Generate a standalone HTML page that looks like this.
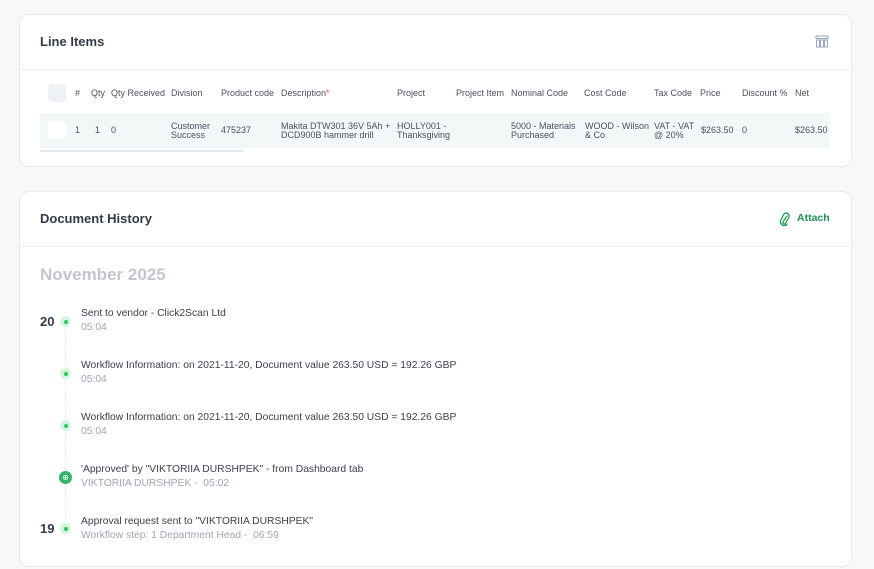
<!DOCTYPE html>
<html><head><meta charset="utf-8"><style>
*{margin:0;padding:0;box-sizing:border-box}
body{width:874px;height:569px;background:#f7f8f9;font-family:"Liberation Sans",sans-serif;color:#3a3f4d;position:relative;overflow:hidden}
.card{position:absolute;left:19px;width:833px;background:#fff;border:1px solid #e8eaed;border-radius:10px}
.a{position:absolute;white-space:nowrap}
.h{font-size:9px;color:#4a5060;top:88px}
.c{font-size:9px;color:#4a5060;line-height:9px}
.dot{position:absolute;left:60px;width:11px;height:11px;border-radius:50%;background:#d3f5dc}
.dot:after{content:"";position:absolute;left:3.5px;top:3.5px;width:4px;height:4px;border-radius:50%;background:#2fc36a}
.t1{font-size:10.3px;color:#3a3f4d}
.t2{font-size:10.3px;color:#a0a5b5}
</style></head><body>
<div class="card" style="top:14px;height:153px">
 <div style="position:absolute;left:0;right:0;top:54px;border-top:1px solid #eceef1"></div>
</div>
<div class="a" style="left:40px;top:34px;font-size:13px;font-weight:bold;color:#353a48">Line Items</div>
<svg class="a" style="left:815px;top:35px" width="14" height="13" viewBox="0 0 14 13" fill="none" stroke="#9aa6bd" stroke-width="1"><rect x="1" y="1" width="12" height="2.5"/><rect x="1.5" y="5" width="3" height="7"/><rect x="5.5" y="5" width="3" height="7"/><rect x="9.5" y="5" width="3" height="7"/></svg>
<div class="a" style="left:48px;top:84px;width:18px;height:18px;border-radius:4px;background:#eef1f6"></div>
<div class="a h" style="left:75px">#</div>
<div class="a h" style="left:91px">Qty</div>
<div class="a h" style="left:111px">Qty Received</div>
<div class="a h" style="left:171px">Division</div>
<div class="a h" style="left:221px">Product code</div>
<div class="a h" style="left:281px">Description<span style="color:#e5485d">*</span></div>
<div class="a h" style="left:397px">Project</div>
<div class="a h" style="left:456px">Project Item</div>
<div class="a h" style="left:511px">Nominal Code</div>
<div class="a h" style="left:584px">Cost Code</div>
<div class="a h" style="left:654px">Tax Code</div>
<div class="a h" style="left:700px">Price</div>
<div class="a h" style="left:742px">Discount %</div>
<div class="a h" style="left:795px">Net</div>
<div class="a" style="left:40px;top:113px;width:790px;height:35px;background:#f2f7f8"></div>
<div class="a" style="left:48px;top:121px;width:18px;height:18px;border-radius:4px;background:#fff"></div>
<div class="a c" style="left:75px;top:126px">1</div>
<div class="a c" style="left:95px;top:126px">1</div>
<div class="a c" style="left:111px;top:126px">0</div>
<div class="a c" style="left:171px;top:122px">Customer<br>Success</div>
<div class="a c" style="left:221px;top:126px">475237</div>
<div class="a c" style="left:281px;top:122px">Makita DTW301 36V 5Ah +<br>DCD900B hammer drill</div>
<div class="a c" style="left:397px;top:122px">HOLLY001 -<br>Thanksgiving</div>
<div class="a c" style="left:511px;top:122px">5000 - Materials<br>Purchased</div>
<div class="a c" style="left:585px;top:122px">WOOD - Wilson<br>&amp; Co</div>
<div class="a c" style="left:654px;top:122px">VAT - VAT<br>@ 20%</div>
<div class="a c" style="left:701px;top:126px">$263.50</div>
<div class="a c" style="left:742px;top:126px">0</div>
<div class="a c" style="left:795px;top:126px">$263.50</div>
<div class="a" style="left:40px;top:150px;width:203px;height:2px;background:#e6e9ee"></div>

<div class="card" style="top:191px;height:376px">
 <div style="position:absolute;left:0;right:0;top:54px;border-top:1px solid #eceef1"></div>
</div>
<div class="a" style="left:40px;top:211px;font-size:13px;font-weight:bold;color:#353a48">Document History</div>
<svg class="a" style="left:779px;top:212px" width="12" height="14" viewBox="0 0 12 14" fill="none" stroke="#1f9d55" stroke-width="1.3" stroke-linecap="round"><path d="M8 4 L4 10 a1.5 1.5 0 0 0 2.5 1.5 L10 5 a3 3 0 0 0 -5 -3 L1.5 8.5 a4 4 0 0 0 6.5 4"/></svg>
<div class="a" style="left:797px;top:212px;font-size:10.5px;font-weight:bold;color:#1f8f56">Attach</div>
<div class="a" style="left:40px;top:265px;font-size:17px;font-weight:bold;color:#c3c6cd">November 2025</div>
<div class="a" style="left:65px;top:326px;height:200px;border-left:1px dashed #e6e8ec"></div>
<div class="a" style="left:40px;top:314px;font-size:13px;font-weight:bold;color:#353a48">20</div>
<div class="a" style="left:40px;top:521px;font-size:13px;font-weight:bold;color:#353a48">19</div>
<div class="dot" style="top:316px"></div>
<div class="dot" style="top:368px"></div>
<div class="dot" style="top:420px"></div>
<div class="a" style="left:59px;top:471px;width:13px;height:13px;border-radius:50%;background:#2fb46a;color:#fff;font-size:8px;text-align:center;line-height:13px">⊕</div>
<div class="dot" style="top:523px"></div>
<div class="a t1" style="left:81px;top:308px">Sent to vendor - Click2Scan Ltd</div>
<div class="a t2" style="left:81px;top:322px">05:04</div>
<div class="a t1" style="left:81px;top:360px">Workflow Information: on 2021-11-20, Document value 263.50 USD = 192.26 GBP</div>
<div class="a t2" style="left:81px;top:374px">05:04</div>
<div class="a t1" style="left:81px;top:412px">Workflow Information: on 2021-11-20, Document value 263.50 USD = 192.26 GBP</div>
<div class="a t2" style="left:81px;top:426px">05:04</div>
<div class="a t1" style="left:81px;top:464px">'Approved' by "VIKTORIIA DURSHPEK" - from Dashboard tab</div>
<div class="a t2" style="left:81px;top:478px">VIKTORIIA DURSHPEK -&nbsp; 05:02</div>
<div class="a t1" style="left:81px;top:516px">Approval request sent to "VIKTORIIA DURSHPEK"</div>
<div class="a t2" style="left:81px;top:530px">Workflow step: 1 Department Head -&nbsp; 06:59</div>
</body></html>
